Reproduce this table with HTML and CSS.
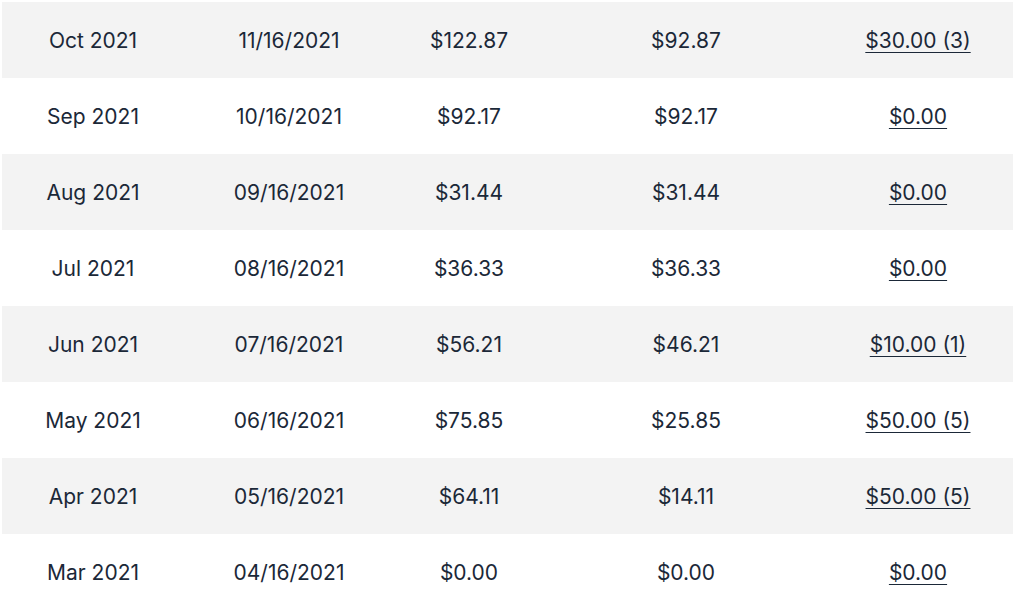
FILE: index.html
```html
<!DOCTYPE html>
<html>
<head>
<meta charset="utf-8">
<link rel="stylesheet" href="styles.css">
</head>
<body>
<div class="table">
  <div class="row alt"><span>Oct 2021</span><span>11/16/2021</span><span>$122.87</span><span>$92.87</span><span><a href="#">$30.00 (3)</a></span></div>
  <div class="row"><span>Sep 2021</span><span>10/16/2021</span><span>$92.17</span><span>$92.17</span><span><a href="#">$0.00</a></span></div>
  <div class="row alt"><span>Aug 2021</span><span>09/16/2021</span><span>$31.44</span><span>$31.44</span><span><a href="#">$0.00</a></span></div>
  <div class="row"><span>Jul 2021</span><span>08/16/2021</span><span>$36.33</span><span>$36.33</span><span><a href="#">$0.00</a></span></div>
  <div class="row alt"><span>Jun 2021</span><span>07/16/2021</span><span>$56.21</span><span>$46.21</span><span><a href="#">$10.00 (1)</a></span></div>
  <div class="row"><span>May 2021</span><span>06/16/2021</span><span>$75.85</span><span>$25.85</span><span><a href="#">$50.00 (5)</a></span></div>
  <div class="row alt"><span>Apr 2021</span><span>05/16/2021</span><span>$64.11</span><span>$14.11</span><span><a href="#">$50.00 (5)</a></span></div>
  <div class="row"><span>Mar 2021</span><span>04/16/2021</span><span>$0.00</span><span>$0.00</span><span><a href="#">$0.00</a></span></div>
</div>
</body>
</html>
```
FILE: styles.css
```css
html, body {
  margin: 0;
  padding: 0;
  background: #ffffff;
  overflow: hidden;
}
.table {
  padding: 2px 0 0 2px;
  font-family: Inter, "Liberation Sans", sans-serif;
  font-size: 21px;
  color: #1b2838;
}
.row {
  display: grid;
  grid-template-columns: 182px 210px 150px 284px 180px 1fr;
  height: 76px;
  align-items: center;
}
.row.alt {
  background: #f3f3f3;
}
.row span {
  text-align: center;
}
.row a {
  color: #1b2838;
  text-decoration: underline;
  text-decoration-thickness: 1px;
  text-underline-offset: 4px;
}
```
